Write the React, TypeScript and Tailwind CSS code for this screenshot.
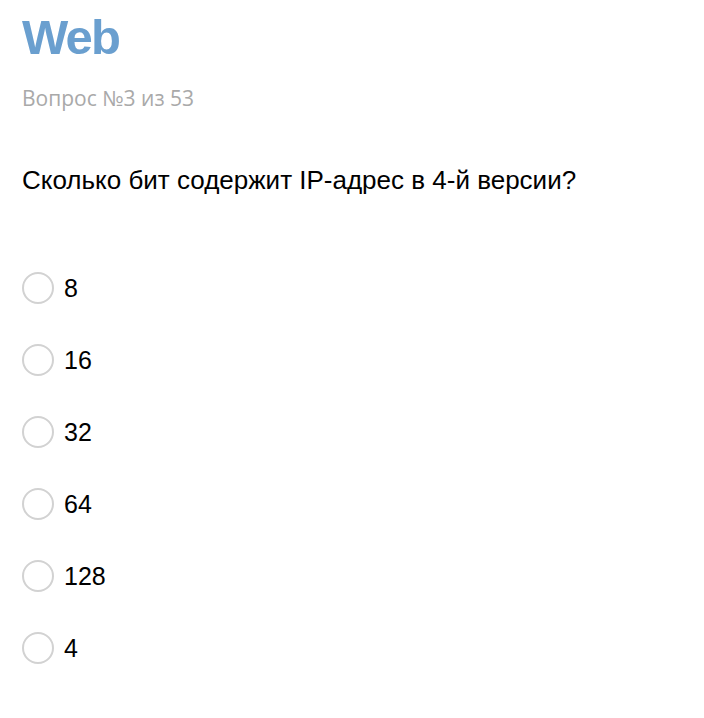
const options = ["8", "16", "32", "64", "128", "4"];

export default function App() {
  return (
    <div className="min-h-screen bg-white px-[22px] pt-[9px] font-['Liberation_Sans',Arial,sans-serif] text-black">
      <h1 className="text-[49px] font-bold leading-[56px] tracking-[-1.8px] text-[#6a9fcf]">Web</h1>

      <p className="mt-[20px] font-['Open_Sans',sans-serif] text-[21px] leading-[26px] text-[#a9a9a9]">
        Вопрос №3 из 53
      </p>

      <h2 className="mt-[54px] text-[26px] leading-[30px]">
        Сколько бит содержит IP-адрес в 4-й версии?
      </h2>

      <div className="mt-[77px] flex flex-col gap-[40px]">
        {options.map((opt) => (
          <label key={opt} className="flex h-[32px] items-center gap-[10px]">
            <span className="h-[32px] w-[32px] shrink-0 rounded-full border-2 border-[#d2d2d2] bg-white" />
            <span className="text-[25px] leading-[32px]">{opt}</span>
          </label>
        ))}
      </div>
    </div>
  );
}
